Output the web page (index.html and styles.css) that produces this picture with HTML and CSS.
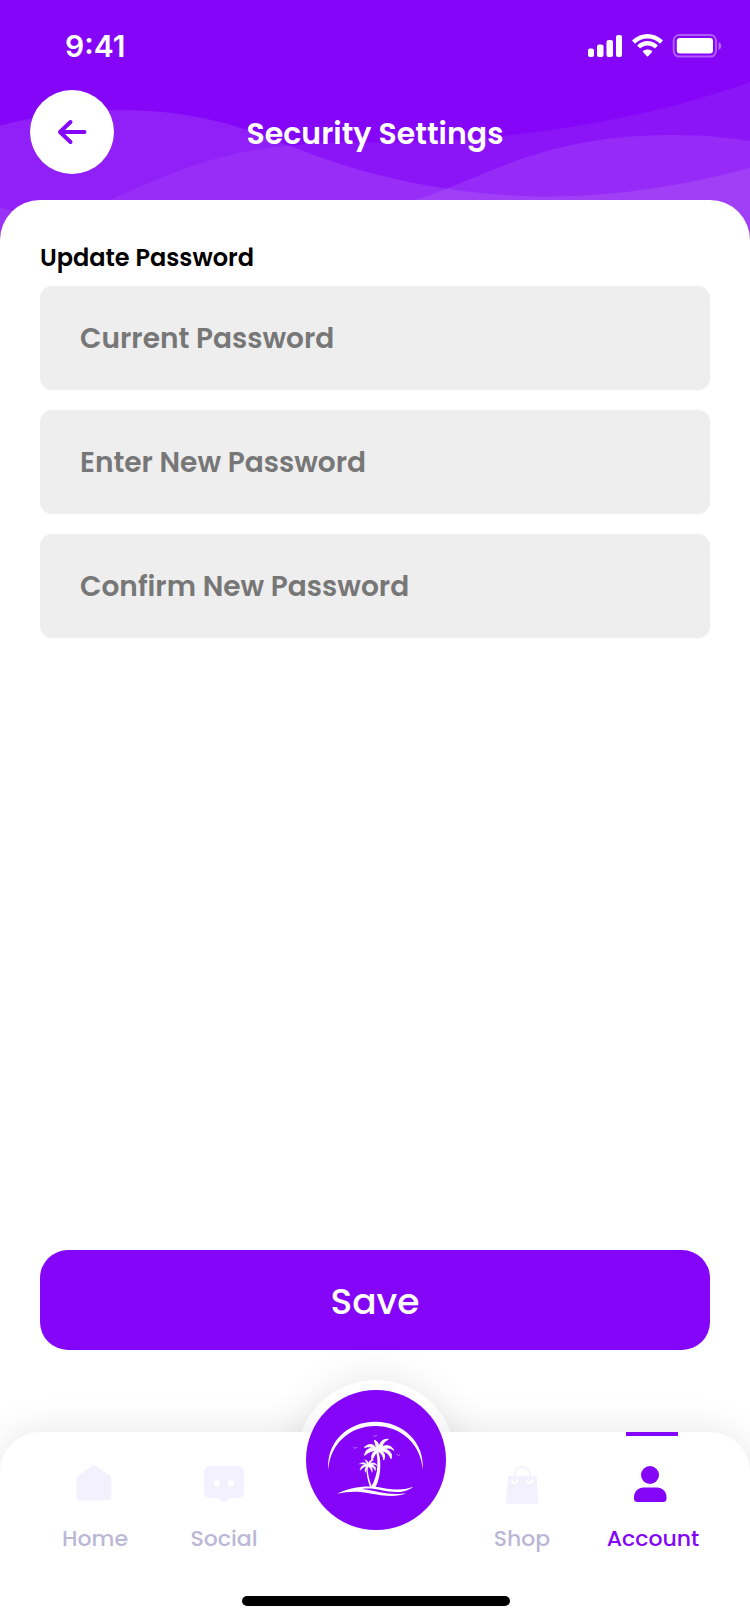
FILE: index.html
```html
<!DOCTYPE html>
<html lang="en">
<head>
<meta charset="utf-8">
<title>Security Settings</title>
<link rel="stylesheet" href="styles.css">
</head>
<body>
<div class="screen">
  <header class="header">
    <svg class="waves" viewBox="0 0 750 250" fill="#fff">
      <path fill-opacity=".105" d="M0 125.500C40 115 80 110 122 110C180 110 225 122 250 131C285 143 330 163 375 174C440 191 500 196.500 548 196.500C620 196.500 690 184 750 168V250H0Z"/>
      <path fill-opacity=".065" d="M110 200C170 173 220 151 292 145.500C320 142 345 142.500 375 142.500C500 143 640 122 750 82V250H0Z"/>
      <path fill-opacity=".09" d="M415 200C445 191 480 174 510 163C570 141 620 135 677 135C705 135 730 138 750 141V250H415Z"/>
      <path fill-opacity=".09" d="M0 207.500L14 211L30 250H0Z"/>
    </svg>
    <div class="status">
      <span class="time">9:41</span>
      <svg class="status-icons" viewBox="0 0 135 24" fill="#fff">
        <rect x="0" y="14.500" width="6" height="8.500" rx="2"/>
        <rect x="9" y="10.500" width="6.500" height="12.500" rx="2"/>
        <rect x="18.500" y="6" width="6.500" height="17" rx="2"/>
        <rect x="28" y="1" width="6" height="22" rx="2"/>
        <path d="M59.500 4.500c4.700 0 8.900 1.700 12 4.700.3.300.7.300 1 0l2-2.100c.4-.3.400-.8 0-1.100-8.500-8-21.500-8-30 0-.4.300-.4.800 0 1.100l2 2.100c.3.300.7.300 1 0 3.200-3 7.400-4.700 12-4.700z"/>
        <path d="M59.500 11.500c2.500 0 5 .9 6.800 2.600.3.300.8.300 1.100 0l2-2.100c.3-.3.300-.8 0-1.100-5.600-5.200-14.200-5.200-19.800 0-.3.300-.3.800 0 1.100l2 2.100c.3.300.8.300 1.100 0 1.800-1.700 4.300-2.600 6.800-2.600z"/>
        <path d="M64 18.100c.4-.3.400-.9 0-1.200-2.700-2-6.300-2-9 0-.4.300-.4.900 0 1.200l3.900 4.200c.3.300.9.300 1.200 0z"/>
        <rect x="85.700" y="1" width="42.300" height="21.600" rx="5.500" fill="none" stroke="#fff" stroke-opacity=".35" stroke-width="2"/>
        <rect x="88.800" y="4" width="36.200" height="15.500" rx="3"/>
        <path fill-opacity=".4" d="M130.500 8v8c1.700-.7 2.700-2.200 2.700-4s-1-3.300-2.700-4z"/>
      </svg>
    </div>
    <div class="navbar">
      <button class="back" aria-label="Back">
        <svg viewBox="0 0 84 84" fill="none" stroke="#8405f7" stroke-width="4" stroke-linecap="round" stroke-linejoin="round"><path d="M54.500 42H30M40.500 32L30 42L40.500 52"/></svg>
      </button>
      <h1 class="title">Security Settings</h1>
    </div>
  </header>
  <main class="sheet">
    <h2 class="section">Update Password</h2>
    <div class="fields">
      <div class="field"><span>Current Password</span></div>
      <div class="field"><span>Enter New Password</span></div>
      <div class="field"><span>Confirm New Password</span></div>
    </div>
    <button class="save"><span>Save</span></button>
  </main>
  <footer class="dock">
    <div class="ring"></div>
    <nav class="tabs">
      <a class="tab home">
        <svg viewBox="0 0 44 44"><path fill="#f4f1fe" d="M20.300 4.800Q22 3.500 23.700 4.800L37.500 14.400Q39.300 15.800 39.300 18V36Q39.300 39.500 35.800 39.500H8Q4.500 39.500 4.500 36V18Q4.500 15.800 6.300 14.400Z"/></svg>
        <span>Home</span>
      </a>
      <a class="tab social">
        <svg viewBox="0 0 44 44"><path fill="#f4f1fe" d="M8 5H36Q42 5 42 11V31Q42 37 36 37H29L23.500 40.500Q22 41.500 20.500 40.500L15 37H8Q2 37 2 31V11Q2 5 8 5Z"/><circle cx="15" cy="22" r="3.100" fill="#fff"/><circle cx="29" cy="22" r="3.100" fill="#fff"/></svg>
        <span>Social</span>
      </a>
      <a class="tab shop">
        <svg viewBox="0 0 44 44"><path fill="#f4f1fe" d="M8 15H36.500L38.300 43H6Z"/><path fill="none" stroke="#fff" stroke-width="2" d="M12.400 18.500a2.600 2.600 0 1 0 4.600 0M27.200 18.500a2.600 2.600 0 1 0 4.600 0"/><path fill="none" stroke="#f4f1fe" stroke-width="2" d="M14.700 20V13.500a7.600 7.600 0 0 1 15.300 0V20"/></svg>
        <span>Shop</span>
      </a>
      <a class="tab account">
        <svg viewBox="0 0 44 44" fill="#8405f7"><circle cx="22" cy="14" r="9"/><path d="M15.500 26.500H29C34 26.500 38.500 30.500 38.500 36V37.500Q38.500 41 35 41H9.500Q6 41 6 37.500V36C6 30.500 10.500 26.500 15.500 26.500Z"/></svg>
        <span>Account</span>
      </a>
    </nav>
    <svg class="logo" viewBox="48 60 420 420" fill="#fff">
      <circle cx="258" cy="270" r="210" fill="#8405f7"/>
      <path d="M115 300C108 218 172 155 256 155C340 155 405 218 398 300C394 224 334 168 256 168C178 168 119 224 115 300Z"/>
      <path d="M261 238Q270 250 271 285Q271 325 256 352H243Q262 318 262 285Q263 258 257 242Z"/>
      <path d="M232 288Q234 325 246 350H240Q229 322 229 290Z"/>
      <path stroke="#fff" stroke-width="3" d="M263 242C253 220 238 219 223 232C237 229 243 230 249 235C235 234 226 242 224 256C235 246 246 242 258 241C247 247 243 257 246 270C252 257 258 249 264 243C274 249 281 258 281 270C287 258 283 249 275 243C287 244 297 252 303 266C309 251 297 240 284 237C294 232 302 234 311 241C306 227 289 223 276 231C278 220 285 212 295 208C279 206 269 217 268 231C265 221 262 213 253 211C257 221 257 229 263 242Z"/>
      <path stroke="#fff" d="M233 287C226 276 217 275 208 282C214 281 220 281 224 285C215 286 210 292 211 301C217 293 224 290 231 289C225 294 223 300 226 307C229 300 232 295 235 290C241 294 245 300 246 307C249 301 247 294 243 290C249 291 253 295 256 302C260 294 254 287 247 285C252 282 257 284 261 287C258 278 249 277 242 280C243 275 247 271 251 270C242 268 237 274 236 280C235 275 230 270 224 269C229 274 229 280 233 287Z"/>
      <path d="M141 371C178 353 214 347 258 350C301 359 333 363 370 350C343 371 308 368 275 361C253 356 234 354 216 357C253 361 299 378 349 370C305 388 252 370 211 366C184 364 164 367 141 371Z"/>
      <path fill="none" stroke="#fff" stroke-width="2" stroke-opacity=".65" d="M190 232l5 3 6-3M250 196l5 3 6-3M320 253l6 4 5-4"/>
    </svg>
    <div class="home-indicator"></div>
  </footer>
</div>
</body>
</html>
```
FILE: styles.css
```css
* { box-sizing: border-box; }
body {
  margin: 0;
  font-family: Poppins, Inter, "Liberation Sans", sans-serif;
  background: #fff;
}
h1, h2 { margin: 0; }
button { border: 0; padding: 0; font-family: inherit; }
.screen {
  width: 750px;
  height: 1624px;
  display: flex;
  flex-direction: column;
  overflow: hidden;
}
.header {
  position: relative;
  height: 250px;
  flex: none;
  background: #8405f7;
}
.waves { position: absolute; inset: 0; width: 750px; height: 250px; }
.status {
  position: relative;
  display: flex;
  justify-content: space-between;
  align-items: center;
  height: 90px;
  padding: 0 27px 0 65px;
}
.time { font-family: Inter, sans-serif; font-size: 30px; font-weight: 600; color: #fff; line-height: 40px; padding-top: 2px; }
.status-icons { width: 135px; height: 24px; margin-top: 2px; }
.navbar {
  position: relative;
  display: grid;
  grid-template-columns: 84px 1fr 84px;
  align-items: center;
  height: 84px;
  padding: 0 30px;
}
.back { width: 84px; height: 84px; border-radius: 50%; background: #fff; }
.back svg { display: block; width: 84px; height: 84px; }
.title {
  color: #fff;
  font-size: 30px;
  font-weight: 600;
  line-height: 44px;
  padding-top: 4px;
  text-align: center;
  white-space: nowrap;
}
.sheet {
  position: relative;
  flex: none;
  display: flex;
  flex-direction: column;
  height: 1232px;
  margin-top: -50px;
  padding: 40px 40px 82px;
  background: #fff;
  border-radius: 40px 40px 0 0;
}
.section { font-size: 24px; font-weight: 600; line-height: 36px; color: #000; }
.fields { display: flex; flex-direction: column; gap: 20px; margin-top: 10px; }
.field {
  display: flex;
  align-items: center;
  height: 104px;
  padding: 2px 40px 0;
  background: #eee;
  border-radius: 12px;
  color: #777;
  font-size: 28px;
  font-weight: 600;
}
.save {
  height: 100px;
  margin-top: auto;
  padding-top: 2px;
  border-radius: 28px;
  background: #8405f7;
  color: #fff;
  font-size: 36px;
  font-weight: 500;
}
.dock { position: relative; flex: none; height: 192px; }
.ring {
  position: absolute;
  left: 296px;
  top: -52px;
  width: 160px;
  height: 160px;
  border-radius: 50%;
  background: #fff;
  box-shadow: 0 0 40px rgba(0, 0, 0, .1);
}
.tabs {
  position: relative;
  display: grid;
  grid-template-columns: 130px 128px 168px 132px 130px;
  padding: 29px 0 0 30px;
  height: 192px;
  background: #fff;
  border-radius: 40px 40px 0 0;
  box-shadow: 0 0 40px rgba(0, 0, 0, .1);
}
.shop { grid-column: 4; }
.tab {
  display: flex;
  flex-direction: column;
  align-items: center;
  gap: 19px;
  color: #bbb8d6;
  font-size: 22px;
  font-weight: 500;
  line-height: 30px;
}
.tab svg { display: block; width: 44px; height: 44px; }
.home svg { margin-right: 3px; }
.account svg { margin-right: 7px; }
.account { position: relative; color: #8405f7; }
.account::before {
  content: "";
  position: absolute;
  left: 38px;
  top: -29px;
  width: 52px;
  height: 4px;
  background: #8405f7;
}
.logo { position: absolute; left: 306px; top: -42px; width: 140px; height: 140px; }
.home-indicator {
  position: absolute;
  left: 242px;
  top: 164px;
  width: 268px;
  height: 10px;
  border-radius: 5px;
  background: #000;
}
```
